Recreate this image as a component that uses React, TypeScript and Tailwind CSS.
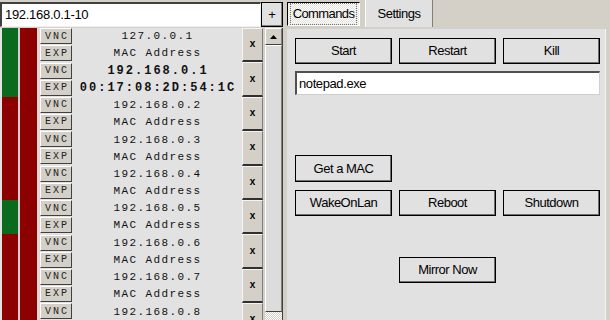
import React from "react";

const hosts = [
  { ip: "127.0.0.1", mac: "MAC Address", up: true, bold: false },
  { ip: "192.168.0.1", mac: "00:17:08:2D:54:1C", up: true, bold: true },
  { ip: "192.168.0.2", mac: "MAC Address", up: false, bold: false },
  { ip: "192.168.0.3", mac: "MAC Address", up: false, bold: false },
  { ip: "192.168.0.4", mac: "MAC Address", up: false, bold: false },
  { ip: "192.168.0.5", mac: "MAC Address", up: true, bold: false },
  { ip: "192.168.0.6", mac: "MAC Address", up: false, bold: false },
  { ip: "192.168.0.7", mac: "MAC Address", up: false, bold: false },
  { ip: "192.168.0.8", mac: "MAC Address", up: false, bold: false },
];

const SmallBtn = ({ children }: { children: React.ReactNode }) => (
  <div className="mb-[1px] flex h-[16px] items-center justify-center border-t border-l border-t-white border-l-white border-r border-b border-r-[#404040] border-b-[#404040] bg-[#d4d0c8] pl-[2px] font-['Liberation_Mono',monospace] text-[10px] tracking-[2px] text-[#222]">
    {children}
  </div>
);

const Btn = ({ children, className = "" }: { children: React.ReactNode; className?: string }) => (
  <div
    className={`flex h-[26px] w-[97px] shrink-0 items-center justify-center border border-black bg-[#e1e1e1] shadow-[inset_-1px_-1px_0_#6f6f6f] text-[13px] tracking-[-0.5px] text-black ${className}`}
  >
    {children}
  </div>
);

const HostRow = ({ host }: { host: (typeof hosts)[number] }) => (
  <div className="flex h-[34.4px] shrink-0">
    <div className={host.up ? "w-[16px] bg-[#0a6a1e]" : "w-[16px] bg-[#8c0000]"} />
    <div className="w-[2px] bg-[#d8cccc]" />
    <div className="w-[17px] bg-[#8c0000]" />
    <div className="w-[3px] bg-[#e2d6d6]" />
    <div className="flex w-[32px] flex-col justify-center">
      <SmallBtn>VNC</SmallBtn>
      <SmallBtn>EXP</SmallBtn>
    </div>
    <div className="flex flex-1 flex-col items-center justify-center font-['Liberation_Mono',monospace] text-[#111]">
      <div
        className={
          host.bold
            ? "flex h-[17px] items-center pl-[2px] text-[12px] font-bold tracking-[2px]"
            : "flex h-[17px] items-center pl-[1px] text-[11px] tracking-[1.4px]"
        }
      >
        {host.ip}
      </div>
      <div
        className={
          host.bold
            ? "flex h-[17px] items-center pl-[2px] text-[12px] font-bold tracking-[2px]"
            : "flex h-[17px] items-center pl-[1px] text-[11px] tracking-[1.4px]"
        }
      >
        {host.mac}
      </div>
    </div>
    <div className="flex w-[21px] items-center justify-center border-t border-l border-t-[#f4f4f4] border-l-[#f4f4f4] border-b-2 border-r border-b-[#303030] border-r-[#808080] bg-[#d4d0c8] font-['Liberation_Mono',monospace] text-[10px] font-bold text-black">
      x
    </div>
  </div>
);

export default function App() {
  return (
    <div className="flex h-[320px] w-[610px] overflow-hidden bg-[#d4d0c8] font-['Liberation_Sans',Arial,sans-serif]">
      {/* left: address bar + host list */}
      <div className="flex w-[283px] flex-col">
        <div className="flex h-[28px] shrink-0">
          <div className="mt-[2px] flex h-[25px] w-[261px] items-center border-t-2 border-l-2 border-t-[#404040] border-l-[#404040] border-r border-b border-r-[#f0f0f0] border-b-[#f0f0f0] bg-white pl-[3px] text-[13px] tracking-[-0.3px] text-black">
            192.168.0.1-10
          </div>
          <div className="mt-[2px] flex h-[25px] w-[22px] items-center justify-center border border-black bg-[#e1e1e1] shadow-[inset_-1px_-1px_0_#808080] text-[13px] text-black">
            +
          </div>
        </div>
        <div className="flex min-h-0 flex-1">
          <div className="flex w-[263px] flex-col overflow-hidden bg-[#e2e2e2] pl-[2px]">
            {hosts.map((h) => (
              <HostRow key={h.ip} host={h} />
            ))}
          </div>
          <div className="ml-[2px] flex w-[18px] flex-col border-r border-r-[#404040]">
            <div className="flex h-[17px] shrink-0 items-center justify-center border-t border-l border-t-white border-l-white border-b border-r border-b-[#404040] border-r-[#808080] bg-[#d4d0c8]">
              <svg width="7" height="4" viewBox="0 0 7 4">
                <path d="M3.5 0 L7 4 L0 4 Z" fill="#000" />
              </svg>
            </div>
            <div className="h-[267px] shrink-0 border-t border-l border-t-white border-l-white border-b border-r border-b-[#404040] border-r-[#808080] bg-[#dcdcdc]" />
            <div className="flex-1 bg-[repeating-conic-gradient(#ffffff_0_25%,#d4d0c8_0_50%)] bg-[length:2px_2px]" />
          </div>
        </div>
      </div>

      {/* right: tabs + commands panel */}
      <div className="flex flex-1 flex-col pl-[4px]">
        <div className="flex h-[29px] shrink-0 items-start gap-[5px]">
          <div className="mt-[2px] flex h-[24px] w-[73px] items-center justify-center border-t border-l border-t-black border-l-black border-r border-b border-r-white border-b-white bg-[repeating-conic-gradient(#ffffff_0_25%,#e4e2dc_0_50%)] bg-[length:2px_2px] text-[13px] tracking-[-0.6px] text-black">
            <span className="border border-dotted border-[#777] px-[2px]">Commands</span>
          </div>
          <div className="flex h-[27px] w-[68px] items-center justify-center border-l border-l-white border-r border-r-[#808080] bg-[#e1e1e1] text-[13px] tracking-[-0.5px] text-black">
            Settings
          </div>
        </div>
        <div className="mr-[4px] flex flex-1 flex-col border-r border-r-[#f4f4f4] bg-[#e1e1e1] pl-[8px] pt-[9px]">
          <div className="flex gap-[7px]">
            <Btn className="h-[25px]">Start</Btn>
            <Btn className="h-[25px]">Restart</Btn>
            <Btn className="h-[25px]">Kill</Btn>
          </div>
          <div className="mt-[7px] flex h-[24px] w-[305px] items-center border-t-2 border-l-2 border-t-[#505050] border-l-[#505050] border-r border-b border-r-[#cfcfcf] border-b-[#cfcfcf] bg-white pl-[2px] text-[13px] tracking-[-0.4px] text-black">
            notepad.exe
          </div>
          <div className="mt-[60px]">
            <Btn className="h-[27px] w-[96px]">Get a MAC</Btn>
          </div>
          <div className="mt-[8px] flex gap-[7px]">
            <Btn>WakeOnLan</Btn>
            <Btn>Reboot</Btn>
            <Btn>Shutdown</Btn>
          </div>
          <div className="mt-[41px] pl-[104px]">
            <Btn className="w-[96px]">Mirror Now</Btn>
          </div>
        </div>
      </div>
    </div>
  );
}
